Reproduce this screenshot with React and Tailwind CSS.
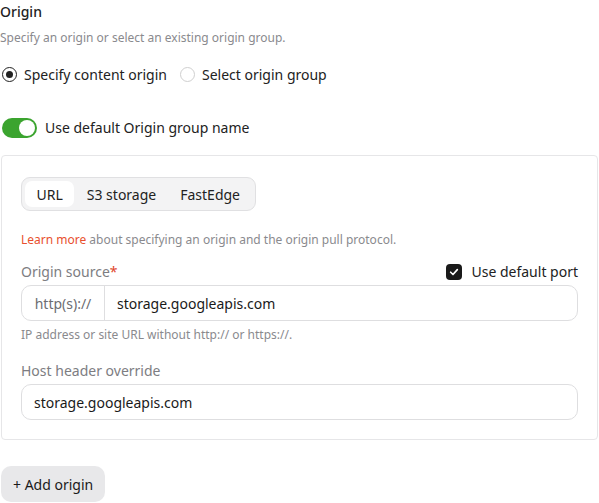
import { useState } from "react";

const font = { fontFamily: '"Noto Sans", "Open Sans", sans-serif' };

function Radio({ checked, label }) {
  return (
    <label className="flex items-center gap-[7px] cursor-pointer">
      <span
        className={
          "w-[15px] h-[15px] rounded-full border flex items-center justify-center bg-white " +
          (checked ? "border-[#222]" : "border-[#cfcfcf]")
        }
      >
        {checked && <span className="w-[7px] h-[7px] rounded-full bg-[#222]" />}
      </span>
      <span className="text-[14px] text-[#222]">{label}</span>
    </label>
  );
}

function Toggle({ on }) {
  return (
    <span
      className={
        "w-[35px] h-[20px] rounded-full flex items-center px-[2px] " +
        (on ? "bg-[#3ba42f] justify-end" : "bg-[#cfcfcf] justify-start")
      }
    >
      <span className="w-[16px] h-[16px] rounded-full bg-white" />
    </span>
  );
}

function Tabs() {
  const [tab, setTab] = useState("URL");
  const tabs = ["URL", "S3 storage", "FastEdge"];
  return (
    <div className="inline-flex items-center gap-[1px] p-[3px] bg-[#f3f3f4] border border-[#e0e0e2] rounded-[9px]">
      {tabs.map((t) => (
        <button
          key={t}
          onClick={() => setTab(t)}
          className={
            "h-[26px] px-[11.5px] rounded-[7px] text-[14px] text-[#222] " +
            (tab === t ? "bg-white" : "bg-transparent")
          }
        >
          {t}
        </button>
      ))}
    </div>
  );
}

export default function App() {
  return (
    <div className="w-[599px] h-[503px] bg-white overflow-hidden" style={font}>
      <div className="pt-[2px]">
        <h2 className="text-[14px] leading-[20px] text-[#222] font-medium">Origin</h2>
        <p className="mt-[8px] text-[12px] leading-[16px] text-[#8a8a8e]">
          Specify an origin or select an existing origin group.
        </p>

        <div className="mt-[18px] flex items-center gap-[13px] pl-[2px]">
          <Radio checked label="Specify content origin" />
          <Radio label="Select origin group" />
        </div>

        <div className="mt-[32px] flex items-center gap-[8px] pl-[2px]">
          <Toggle on />
          <span className="text-[14px] text-[#222]">Use default Origin group name</span>
        </div>

        <div className="mt-[17px] ml-[1px] mr-[1px] border border-[#e6e6e8] rounded-[4px] px-[19px] pt-[21px] pb-[19px]">
          <Tabs />

          <p className="mt-[21px] text-[12px] leading-[16px] text-[#8a8a8e]">
            <a href="#" className="text-[#e8502e]">Learn more</a> about specifying an origin and the origin pull protocol.
          </p>

          <div className="mt-[13px] flex items-end justify-between">
            <span className="text-[14px] leading-[20px] text-[#7d7d82]">
              Origin source<span className="text-[#e0452d]">*</span>
            </span>
            <label className="flex items-center gap-[9px]">
              <span className="w-[16px] h-[16px] rounded-[4px] bg-[#1a1a1a] flex items-center justify-center">
                <svg width="10" height="10" viewBox="0 0 12 12" fill="none">
                  <path d="M2 6.3 4.8 9 10 3.2" stroke="white" strokeWidth="2" strokeLinecap="round" strokeLinejoin="round" />
                </svg>
              </span>
              <span className="text-[14px] text-[#222]">Use default port</span>
            </label>
          </div>

          <div className="mt-[3px] flex h-[36px] border border-[#dedee0] rounded-[10px] overflow-hidden">
            <span className="w-[83px] flex items-center justify-center text-[14px] text-[#6d6d72] border-r border-[#dedee0]">
              http(s)://
            </span>
            <input
              className="flex-1 px-[12px] text-[14px] text-[#1a1a1a] outline-none"
              defaultValue="storage.googleapis.com"
            />
          </div>
          <p className="mt-[6px] text-[12px] leading-[16px] text-[#8a8a8e]">
            IP address or site URL without http:// or https://.
          </p>

          <label className="block mt-[18px] text-[14px] leading-[20px] text-[#7d7d82]">Host header override</label>
          <input
            className="mt-[3px] w-full h-[36px] px-[12px] border border-[#dedee0] rounded-[10px] text-[14px] text-[#1a1a1a] outline-none"
            defaultValue="storage.googleapis.com"
          />
        </div>

        <button className="mt-[26px] ml-[1px] h-[36px] px-[12px] rounded-[10px] bg-[#e8e8ea] text-[14px] text-[#1a1a1a]">
          + Add origin
        </button>
      </div>
    </div>
  );
}
